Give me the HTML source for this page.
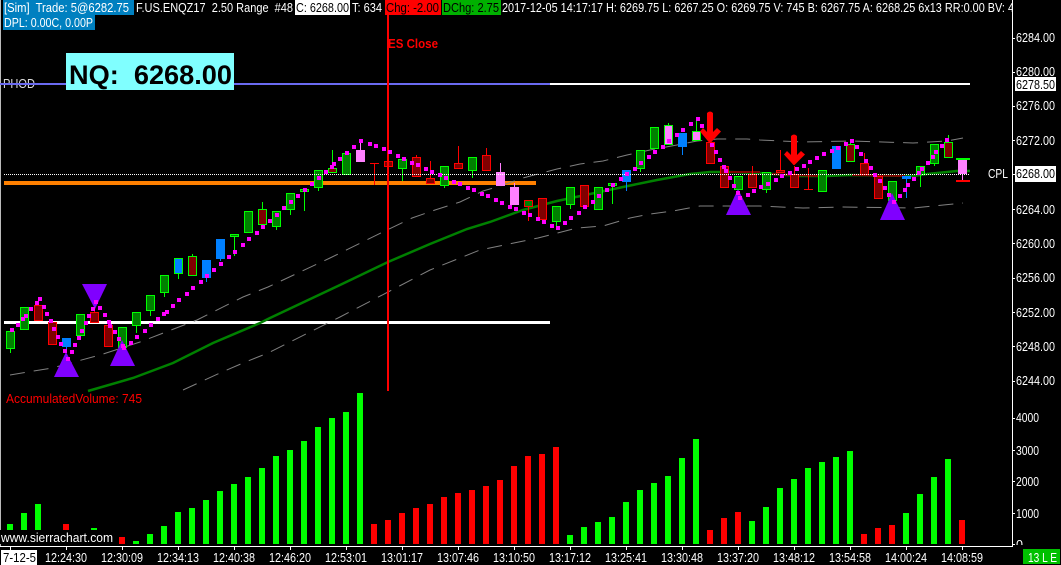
<!DOCTYPE html>
<html>
<head>
<meta charset="utf-8">
<style>
html,body{margin:0;padding:0;background:#000;width:1061px;height:565px;overflow:hidden}
svg{display:block;font-family:"Liberation Sans",sans-serif;font-size:13px}
.g{fill:#008000;stroke:#0f0}.r{fill:#800000;stroke:#f00}.rg{fill:#800000;stroke:#0f0}
.gr{fill:#008000;stroke:#f00}.b{fill:#0080ff;stroke:#0080ff}.bg{fill:#0080ff;stroke:#0f0}
.p{fill:#ff80ff;stroke:#ff80ff}.pg{fill:#ff80ff;stroke:#0f0}
.w{fill:#fff}.k{fill:#000}
.ax text{font-size:13px;fill:#fff}
.gd{fill:none;stroke:#808080;stroke-width:1;stroke-dasharray:15 9}
</style>
</head>
<body>
<svg width="1061" height="565" viewBox="0 0 1061 565" xmlns="http://www.w3.org/2000/svg">
<rect width="1061" height="565" fill="#000"/>
<rect x="0" y="0" width="1" height="546" fill="#bbb"/>

<!-- price lines -->
<rect x="0" y="83" width="550" height="2" fill="#6a6af0"/>
<rect x="550" y="83" width="420" height="2" fill="#fff"/>
<rect x="4" y="181" width="532" height="4" fill="#ff8000"/>
<rect x="4" y="321" width="546" height="3" fill="#fff"/>

<!-- bands -->
<polyline class="gd" points="10,375 52,368 100,355 140,342 197,320 243,297 268,287 330,258 387,230 412,218 435,210 460,202 483,191 497,187 523,178 557,169 580,164 603,161 627,155 650,150 677,145 697,141 717,139 747,139 760,140 803,142 850,141 913,143 947,141 963,138"/>
<polyline class="gd" points="183,390 220,373 243,363 268,353 340,317 388,292 430,270 480,250 538,238 577,228 603,226 630,218 650,214 673,211 700,206 723,206 760,206 803,208 843,207 913,208 963,203"/>
<!-- moving average -->
<polyline fill="none" stroke="#008000" stroke-width="2.5" points="88,391 133,378 173,363 213,343 260,323 270,318 340,285 388,262 430,244 467,229 490,222 523,210 557,201 590,194 623,187 657,180 690,174 710,172 730,172 760,173 800,176 827,176 850,175 913,176 927,174 957,171 970,171"/>
<polyline fill="none" stroke="#800000" stroke-width="2" points="730,172 760,172"/>
<polyline fill="none" stroke="#800000" stroke-width="2" points="772,174 818,176"/>
<polyline fill="none" stroke="#800000" stroke-width="2" points="852,175 905,176"/>

<!-- wicks -->
<g stroke-width="1" fill="none" shape-rendering="crispEdges">
<path stroke="#0f0" d="M10.5 349V353M136.5 326V333M150.5 311V316M164.5 293V297M178.5 274V279M192.5 254V256M234.5 237V256M262.5 202V209M276.5 227V230M290.5 210V215M304.5 192V211M318.5 188V191M332.5 150V168M402.5 169V181M444.5 186V188M472.5 171V178M556.5 222V228M570.5 205V209M612.5 186V204M640.5 169V172M668.5 123V125M696.5 118V131M766.5 190V193M850.5 139V144M920.5 175V187M934.5 164V166M948.5 135V142"/>
<path stroke="#f00" d="M38.5 300V305M94.5 308V312M374.5 163V185M416.5 155V157M430.5 161V178M458.5 146V163M486.5 148V155M528.5 207V221M752.5 166V174M780.5 150V170M794.5 166V174M808.5 168V189M864.5 153V163"/>
<path stroke="#0080ff" d="M66.5 347V353M206.5 278V282M220.5 259V261M626.5 182V191M682.5 147V155M906.5 179V198"/>
<path stroke="#ff80ff" d="M360.5 140V150M500.5 163V172M514.5 183V187M962.5 174V180"/>
</g>

<!-- candles -->
<g stroke-width="1" shape-rendering="crispEdges">
<rect class="g" x="6.5" y="331.5" width="8" height="17"/>
<rect class="g" x="20.5" y="307.5" width="8" height="22"/>
<rect class="r" x="34.5" y="305.5" width="8" height="15"/>
<rect class="r" x="48.5" y="322.5" width="8" height="22"/>
<rect class="b" x="62.5" y="338.5" width="8" height="8"/>
<rect class="g" x="76.5" y="314.5" width="8" height="21"/>
<rect class="r" x="90.5" y="312.5" width="8" height="10"/>
<rect class="r" x="104.5" y="325.5" width="8" height="21"/>
<rect class="g" x="118.5" y="327.5" width="8" height="20"/>
<rect class="g" x="132.5" y="312.5" width="8" height="13"/>
<rect class="g" x="146.5" y="295.5" width="8" height="15"/>
<rect class="g" x="160.5" y="275.5" width="8" height="17"/>
<rect class="bg" x="174.5" y="258.5" width="8" height="15"/>
<rect class="rg" x="188.5" y="256.5" width="8" height="19"/>
<rect class="b" x="202.5" y="260.5" width="8" height="17"/>
<rect class="b" x="216.5" y="239.5" width="8" height="19"/>
<rect class="g" x="230.5" y="234.5" width="8" height="2"/>
<rect class="g" x="244.5" y="211.5" width="8" height="21"/>
<rect class="rg" x="258.5" y="209.5" width="8" height="15"/>
<rect class="g" x="272.5" y="211.5" width="8" height="15"/>
<rect class="g" x="286.5" y="193.5" width="8" height="16"/>
<rect class="g" x="300.5" y="189.5" width="8" height="2"/>
<rect class="g" x="314.5" y="170.5" width="8" height="17"/>
<rect class="rg" x="328.5" y="168.5" width="8" height="4"/>
<rect class="g" x="342.5" y="153.5" width="8" height="21"/>
<rect class="p" x="356.5" y="150.5" width="8" height="11"/>
<rect x="370" y="163" width="9" height="1" fill="#f00" stroke="none"/>
<rect class="r" x="384.5" y="161.5" width="8" height="5"/>
<rect class="g" x="398.5" y="159.5" width="8" height="9"/>
<rect class="r" x="412.5" y="157.5" width="8" height="19"/>
<rect class="r" x="426.5" y="178.5" width="8" height="5"/>
<rect class="g" x="440.5" y="166.5" width="8" height="19"/>
<rect class="r" x="454.5" y="163.5" width="8" height="5"/>
<rect class="g" x="468.5" y="157.5" width="8" height="13"/>
<rect class="r" x="482.5" y="155.5" width="8" height="15"/>
<rect class="p" x="496.5" y="172.5" width="8" height="13"/>
<rect class="p" x="510.5" y="187.5" width="8" height="17"/>
<rect class="gr" x="524.5" y="200.5" width="8" height="6"/>
<rect class="r" x="538.5" y="198.5" width="8" height="21"/>
<rect class="g" x="552.5" y="206.5" width="8" height="15"/>
<rect class="g" x="566.5" y="187.5" width="8" height="17"/>
<rect class="r" x="580.5" y="185.5" width="8" height="21"/>
<rect class="g" x="594.5" y="187.5" width="8" height="22"/>
<rect class="g" x="608.5" y="183.5" width="8" height="2"/>
<rect class="b" x="622.5" y="170.5" width="8" height="11"/>
<rect class="g" x="636.5" y="150.5" width="8" height="18"/>
<rect class="g" x="650.5" y="127.5" width="8" height="21"/>
<rect class="pg" x="664.5" y="125.5" width="8" height="19"/>
<rect class="b" x="678.5" y="133.5" width="8" height="13"/>
<rect class="pg" x="692.5" y="131.5" width="8" height="9"/>
<rect class="r" x="706.5" y="142.5" width="8" height="21"/>
<rect class="r" x="720.5" y="166.5" width="8" height="21"/>
<rect class="g" x="734.5" y="176.5" width="8" height="13"/>
<rect class="r" x="748.5" y="174.5" width="8" height="13"/>
<rect class="g" x="762.5" y="172.5" width="8" height="17"/>
<rect class="r" x="776.5" y="170.5" width="8" height="2"/>
<rect class="r" x="790.5" y="174.5" width="8" height="13"/>
<rect x="804" y="189" width="9" height="1" fill="#f00" stroke="none"/>
<rect class="g" x="818.5" y="170.5" width="8" height="21"/>
<rect class="b" x="832.5" y="146.5" width="8" height="22"/>
<rect class="rg" x="846.5" y="144.5" width="8" height="17"/>
<rect class="r" x="860.5" y="163.5" width="8" height="11"/>
<rect class="r" x="874.5" y="176.5" width="8" height="22"/>
<rect class="g" x="888.5" y="181.5" width="8" height="19"/>
<rect class="b" x="902.5" y="176.5" width="8" height="2"/>
<rect class="g" x="916.5" y="166.5" width="8" height="8"/>
<rect class="g" x="930.5" y="144.5" width="8" height="19"/>
<rect class="rg" x="944.5" y="142.5" width="8" height="15"/>
<rect x="958" y="160" width="9" height="14" fill="#ff80ff"/>
<rect x="956" y="158" width="14" height="2" fill="#0f0"/>
<rect x="956" y="180" width="14" height="2" fill="#f00"/>
</g>

<!-- dotted CPL line -->
<line x1="4" y1="174.5" x2="970" y2="174.5" stroke="#fff" stroke-width="1" stroke-dasharray="1 1" shape-rendering="crispEdges"/>

<!-- red vertical -->
<rect x="387" y="14" width="2" height="377" fill="#f00"/>

<!-- triangles -->
<g fill="#8000ff">
<polygon points="66,352 79,377 54,377"/>
<polygon points="122,340 135,366 110,366"/>
<polygon points="82,284 107,284 95,309"/>
<polygon points="738,189 751,215 726,215"/>
<polygon points="892,193 905,220 880,220"/>
</g>

<!-- arrows -->
<g fill="#f00">
<path d="M707 113Q710 110 713 113V132L717 128L721 131.500L710.500 143H709.500L700 131.500L703 128L707 132Z"/>
<path d="M791 136Q794 133 797 136V155L801 151L805 154.500L794.500 165H793.500L784 154.500L787 151L791 155Z"/>
</g>

<!-- magenta dots -->
<path id="md" fill="none" stroke="#ff00ff" stroke-width="4" shape-rendering="crispEdges" d="M10 330h3M16 325h3M21 319h3M24 316h3M29 309h3M35 303h3M38 299h3M42 307h3M45 314h3M49 321h3M52 329h3M56 337h3M59 344h3M63 351h3M66 359h3M70 352h3M73 345h3M77 338h3M80 331h3M84 323h3M87 316h3M91 309h3M94 302h3M98 308h3M103 315h3M107 322h3M108 326h3M113 332h3M117 339h3M121 346h3M122 348h3M129 343h3M135 337h3M143 331h3M149 325h3M156 319h3M162 314h3M165 312h3M171 306h3M177 300h3M185 294h3M191 288h3M199 282h3M205 276h3M212 270h3M219 264h3M227 257h3M233 252h3M241 245h3M247 239h3M255 233h3M261 227h3M268 221h3M275 215h3M282 208h3M289 202h3M296 196h3M303 190h3M310 184h3M317 178h3M324 172h3M330 167h3M332 164h3M338 159h3M345 153h3M352 147h3M359 141h3M368 144h3M374 146h3M382 149h3M388 152h3M396 156h3M402 159h3M410 163h3M416 165h3M424 169h3M430 172h3M438 175h3M444 178h3M452 182h3M458 184h3M466 188h3M472 190h3M480 194h3M486 196h3M494 200h3M500 203h3M508 207h3M514 209h3M522 213h3M528 215h3M536 219h3M542 222h3M550 226h3M556 228h3M563 223h3M569 218h3M577 213h3M583 207h3M591 202h3M597 196h3M605 190h3M611 185h3M619 179h3M625 174h3M633 169h3M639 163h3M647 157h3M653 152h3M661 147h3M667 141h3M675 135h3M681 130h3M689 124h3M696 119h3M700 126h3M710 145h3M714 152h3M718 160h3M722 167h3M724 171h3M728 178h3M732 186h3M736 193h3M738 198h3M746 195h3M752 191h3M759 187h3M766 184h3M774 180h3M780 176h3M788 173h3M795 169h3M802 166h3M808 162h3M815 158h3M822 154h3M830 151h3M836 148h3M844 144h3M850 141h3M855 147h3M859 154h3M864 161h3M869 168h3M873 175h3M878 181h3M883 188h3M887 195h3M892 202h3M898 196h3M903 190h3M906 185h3M912 179h3M917 173h3M920 169h3M926 163h3M931 157h3M934 152h3M940 146h3M945 140h3"/>
<use href="#md" x="1"/>

<!-- volume -->
<path fill="#0f0" d="M7 524h6V544h-6zM21 513h6V544h-6zM35 504h6V544h-6zM91 528h6V544h-6zM133 541h6V544h-6zM147 534h6V544h-6zM161 526h6V544h-6zM175 512h6V544h-6zM189 508h6V544h-6zM203 500h6V544h-6zM217 491h6V544h-6zM231 484h6V544h-6zM245 477h6V544h-6zM259 468h6V544h-6zM273 456h6V544h-6zM287 450h6V544h-6zM301 441h6V544h-6zM315 427h6V544h-6zM329 418h6V544h-6zM343 412h6V544h-6zM357 393h6V544h-6zM567 535h6V544h-6zM581 527h6V544h-6zM595 522h6V544h-6zM609 517h6V544h-6zM623 502h6V544h-6zM637 490h6V544h-6zM651 483h6V544h-6zM665 476h6V544h-6zM679 458h6V544h-6zM693 439h6V544h-6zM749 521h6V544h-6zM763 507h6V544h-6zM777 488h6V544h-6zM791 479h6V544h-6zM805 468h6V544h-6zM819 462h6V544h-6zM833 457h6V544h-6zM847 451h6V544h-6zM903 513h6V544h-6zM917 494h6V544h-6zM931 477h6V544h-6zM945 459h6V544h-6z"/>
<path fill="#f00" d="M63 524h6V544h-6zM119 537h6V544h-6zM371 524h6V544h-6zM385 520h6V544h-6zM399 513h6V544h-6zM413 508h6V544h-6zM427 504h6V544h-6zM441 497h6V544h-6zM455 493h6V544h-6zM469 490h6V544h-6zM483 486h6V544h-6zM497 480h6V544h-6zM511 466h6V544h-6zM525 456h6V544h-6zM539 454h6V544h-6zM553 447h6V544h-6zM707 530h6V544h-6zM721 518h6V544h-6zM735 512h6V544h-6zM861 534h6V544h-6zM875 528h6V544h-6zM889 525h6V544h-6zM959 520h6V544h-6z"/>

<!-- watermark -->
<rect x="0" y="530" width="115" height="14" fill="#000"/>
<text x="1" y="542" fill="#fff" textLength="112" lengthAdjust="spacingAndGlyphs">www.sierrachart.com</text>

<!-- axes -->
<rect x="0" y="546" width="1012" height="1" fill="#fff"/>
<rect x="1012" y="0" width="1" height="547" fill="#fff"/>
<path stroke="#fff" stroke-width="1" fill="none" shape-rendering="crispEdges" d="M10.500 547V550M66.500 547V550M122.500 547V550M178.500 547V550M234.500 547V550M290.500 547V550M346.500 547V550M402.500 547V550M458.500 547V550M514.500 547V550M570.500 547V550M626.500 547V550M682.500 547V550M738.500 547V550M794.500 547V550M850.500 547V550M906.500 547V550M962.500 547V550"/>
<path stroke="#fff" stroke-width="1" fill="none" shape-rendering="crispEdges" d="M1013 38.500h2M1013 72.500h2M1013 106.500h2M1013 140.500h2M1013 174.500h2M1013 209.500h2M1013 243.500h2M1013 278.500h2M1013 312.500h2M1013 346.500h2M1013 381.500h2M1013 418.500h2M1013 450.500h2M1013 481.500h2M1013 513.500h2M1013 544.500h2"/>

<!-- volume axis labels -->
<g class="ax">
<text x="1016" y="549" textLength="7" lengthAdjust="spacingAndGlyphs">0</text>
</g>
<rect x="1013" y="545" width="48" height="4" fill="#000"/>
<rect x="1013" y="549" width="48" height="16" fill="#000"/>
<g class="ax">
<text x="1016" y="422" textLength="23" lengthAdjust="spacingAndGlyphs">4000</text>
<text x="1016" y="455" textLength="23" lengthAdjust="spacingAndGlyphs">3000</text>
<text x="1016" y="486" textLength="23" lengthAdjust="spacingAndGlyphs">2000</text>
<text x="1016" y="518" textLength="23" lengthAdjust="spacingAndGlyphs">1000</text>
<text x="1016" y="42" textLength="39" lengthAdjust="spacingAndGlyphs">6284.00</text>
<text x="1016" y="76" textLength="39" lengthAdjust="spacingAndGlyphs">6280.00</text>
<text x="1016" y="110" textLength="39" lengthAdjust="spacingAndGlyphs">6276.00</text>
<text x="1016" y="145" textLength="39" lengthAdjust="spacingAndGlyphs">6272.00</text>
<text x="1016" y="214" textLength="39" lengthAdjust="spacingAndGlyphs">6264.00</text>
<text x="1016" y="248" textLength="39" lengthAdjust="spacingAndGlyphs">6260.00</text>
<text x="1016" y="282" textLength="39" lengthAdjust="spacingAndGlyphs">6256.00</text>
<text x="1016" y="317" textLength="39" lengthAdjust="spacingAndGlyphs">6252.00</text>
<text x="1016" y="351" textLength="39" lengthAdjust="spacingAndGlyphs">6248.00</text>
<text x="1016" y="385" textLength="39" lengthAdjust="spacingAndGlyphs">6244.00</text>
<text x="988" y="178" textLength="20" lengthAdjust="spacingAndGlyphs">CPL</text>
</g>
<rect x="1015" y="77" width="41" height="14" fill="#fff"/>
<text x="1016" y="89" fill="#000" textLength="39" lengthAdjust="spacingAndGlyphs">6278.50</text>
<rect x="1015" y="166" width="41" height="16" fill="#fff"/>
<text x="1016" y="178" fill="#000" textLength="39" lengthAdjust="spacingAndGlyphs">6268.00</text>

<!-- time axis labels -->
<rect x="1" y="550" width="36" height="15" fill="#fff"/>
<text x="3" y="562" fill="#000" textLength="33" lengthAdjust="spacingAndGlyphs">7-12-5</text>
<g class="ax" text-anchor="middle">
<text x="66" y="562" textLength="42" lengthAdjust="spacingAndGlyphs">12:24:30</text>
<text x="122" y="562" textLength="42" lengthAdjust="spacingAndGlyphs">12:30:09</text>
<text x="178" y="562" textLength="42" lengthAdjust="spacingAndGlyphs">12:34:13</text>
<text x="234" y="562" textLength="42" lengthAdjust="spacingAndGlyphs">12:40:38</text>
<text x="290" y="562" textLength="42" lengthAdjust="spacingAndGlyphs">12:46:20</text>
<text x="346" y="562" textLength="42" lengthAdjust="spacingAndGlyphs">12:53:01</text>
<text x="402" y="562" textLength="42" lengthAdjust="spacingAndGlyphs">13:01:17</text>
<text x="458" y="562" textLength="42" lengthAdjust="spacingAndGlyphs">13:07:46</text>
<text x="514" y="562" textLength="42" lengthAdjust="spacingAndGlyphs">13:10:50</text>
<text x="570" y="562" textLength="42" lengthAdjust="spacingAndGlyphs">13:17:12</text>
<text x="626" y="562" textLength="42" lengthAdjust="spacingAndGlyphs">13:25:41</text>
<text x="682" y="562" textLength="42" lengthAdjust="spacingAndGlyphs">13:30:48</text>
<text x="738" y="562" textLength="42" lengthAdjust="spacingAndGlyphs">13:37:20</text>
<text x="794" y="562" textLength="42" lengthAdjust="spacingAndGlyphs">13:48:12</text>
<text x="850" y="562" textLength="42" lengthAdjust="spacingAndGlyphs">13:54:58</text>
<text x="906" y="562" textLength="42" lengthAdjust="spacingAndGlyphs">14:00:24</text>
<text x="962" y="562" textLength="42" lengthAdjust="spacingAndGlyphs">14:08:59</text>
</g>
<rect x="1023" y="549" width="37" height="15" fill="#00c000"/>
<text x="1028" y="562" fill="#fff" textLength="29" lengthAdjust="spacingAndGlyphs">13 L E</text>

<!-- chart labels -->
<text x="3" y="88" fill="#ddd" textLength="32" lengthAdjust="spacingAndGlyphs">PHOD</text>
<rect x="0" y="83" width="36" height="2" fill="#6a6af0"/>
<rect x="66" y="53" width="168" height="37" fill="#80ffff"/>
<text x="69" y="84" fill="#000" font-weight="bold" font-size="27" textLength="163" lengthAdjust="spacingAndGlyphs">NQ:&#160;&#160;6268.00</text>
<text x="388" y="48" fill="#f00" font-weight="bold" textLength="50" lengthAdjust="spacingAndGlyphs">ES Close</text>
<text x="6" y="403" fill="#f00" textLength="136" lengthAdjust="spacingAndGlyphs">AccumulatedVolume: 745</text>

<!-- header -->
<rect x="3" y="0" width="131" height="15" fill="#0080c0"/>
<text x="4" y="12" fill="#fff" textLength="125" lengthAdjust="spacingAndGlyphs" xml:space="preserve">[Sim]  Trade: 5@6282.75</text>
<text x="136" y="12" fill="#fff" textLength="157" lengthAdjust="spacingAndGlyphs" xml:space="preserve">F.US.ENQZ17  2.50 Range  #48</text>
<rect x="295" y="0" width="55" height="15" fill="#fff"/>
<text x="296" y="12" fill="#000" textLength="53" lengthAdjust="spacingAndGlyphs">C: 6268.00</text>
<text x="352" y="12" fill="#fff" textLength="30" lengthAdjust="spacingAndGlyphs">T: 634</text>
<rect x="385" y="0" width="56" height="15" fill="#f00"/>
<text x="386" y="12" fill="#000" textLength="53" lengthAdjust="spacingAndGlyphs">Chg: -2.00</text>
<rect x="442" y="0" width="59" height="15" fill="#00b000"/>
<text x="443" y="12" fill="#000" textLength="56" lengthAdjust="spacingAndGlyphs">DChg: 2.75</text>
<text x="502" y="12" fill="#fff" textLength="512" lengthAdjust="spacingAndGlyphs">2017-12-05 14:17:17 H: 6269.75 L: 6267.25 O: 6269.75 V: 745 B: 6267.75 A: 6268.25 6x13 RR:0.00 BV: 4</text>
<rect x="1013" y="0" width="48" height="16" fill="#000"/>
<rect x="3" y="15" width="92" height="15" fill="#0080c0"/>
<text x="4" y="27" fill="#fff" textLength="89" lengthAdjust="spacingAndGlyphs">DPL: 0.00C, 0.00P</text>
</svg>
</body>
</html>
